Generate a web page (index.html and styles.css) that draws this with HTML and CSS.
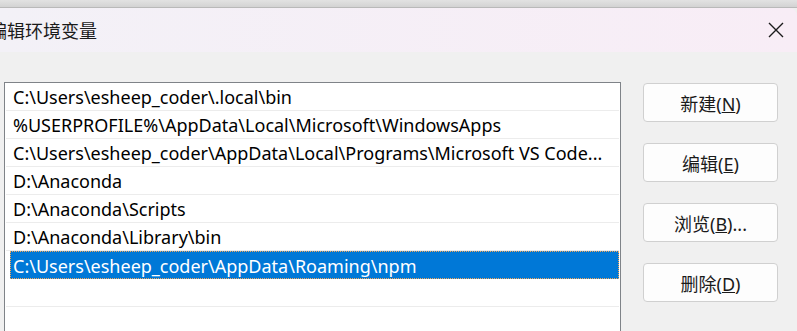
FILE: index.html
```html
<!DOCTYPE html>
<html lang="zh-CN">
<head>
    <meta charset="UTF-8">
    <title>编辑环境变量</title>
    <link rel="stylesheet" href="styles.css">
</head>
<body>
    <div class="top-strip"></div>
    <div class="window">
        <!-- Barre de titre -->
        <div class="title-bar">
            <span class="title">编辑环境变量</span>
            <svg class="close-icon" width="16" height="16" viewBox="0 0 16 16">
                <path d="M1 1 L15 15 M15 1 L1 15" stroke="#1b1b1b" stroke-width="1.4" fill="none"/>
            </svg>
        </div>

        <div class="content">
            <!-- Liste des chemins -->
            <div class="path-list">
                <div class="row">C:\Users\esheep_coder\.local\bin</div>
                <div class="row">%USERPROFILE%\AppData\Local\Microsoft\WindowsApps</div>
                <div class="row">C:\Users\esheep_coder\AppData\Local\Programs\Microsoft VS Code...</div>
                <div class="row">D:\Anaconda</div>
                <div class="row">D:\Anaconda\Scripts</div>
                <div class="row">D:\Anaconda\Library\bin</div>
                <div class="row selected">C:\Users\esheep_coder\AppData\Roaming\npm</div>
                <div class="row"></div>
                <div class="row"></div>
            </div>

            <!-- Boutons -->
            <div class="buttons">
                <button class="btn">新建(<u>N</u>)</button>
                <button class="btn">编辑(<u>E</u>)</button>
                <button class="btn">浏览(<u>B</u>)...</button>
                <button class="btn">删除(<u>D</u>)</button>
            </div>
        </div>
    </div>
</body>
</html>
```

FILE: styles.css
```css
html, body {
    margin: 0;
    height: 100%;
    overflow: hidden;
}
body {
    font-family: "Noto Sans", "Noto Sans CJK SC", sans-serif;
    background: #f0f0f0;
    color: #000;
}
.top-strip {
    height: 7px;
    background: linear-gradient(#e2e2e2, #d3d3d3);
    border-bottom: 1px solid #b9b9b9;
}
.window {
    background: #f0f0f0;
}
.title-bar {
    height: 44px;
    display: flex;
    align-items: center;
    justify-content: space-between;
    background: linear-gradient(to right, #f3f1f7, #f8edf6);
    border-top-right-radius: 8px;
}
.title {
    margin-left: -11px;
    font-family: "Noto Sans CJK SC", sans-serif;
    font-size: 18px;
    color: #1a1a1a;
}
.close-icon {
    margin-right: 13px;
}
.content {
    display: flex;
    padding-top: 30px;
    height: 249px;
}
.path-list {
    margin-left: 4px;
    width: 613px;
    height: 280px;
    background: #fff;
    border: 1px solid #7f8388;
    padding: 0 1px;
}
.row {
    height: 25px;
    line-height: 25px;
    padding-top: 2px;
    border-bottom: 1px solid #ececec;
    padding-left: 7px;
    font-size: 18px;
    white-space: nowrap;
    overflow: hidden;
}
.row.selected {
    height: 24px;
    line-height: 24px;
    margin-left: 4px;
    padding-left: 2px;
    background: #0078d7;
    color: #fff;
    border: 1px dotted #f2a65a;
}
.buttons {
    margin-left: 22px;
    display: flex;
    flex-direction: column;
    gap: 21px;
    padding-top: 1px;
}
.btn {
    width: 135px;
    height: 39px;
    background: #fdfdfd;
    border: 1px solid #d0d0d0;
    border-radius: 4px;
    font-family: "Noto Sans", "Noto Sans CJK SC", sans-serif;
    font-size: 18px;
    color: #1a1a1a;
    padding: 1px 0 0;
}
```
